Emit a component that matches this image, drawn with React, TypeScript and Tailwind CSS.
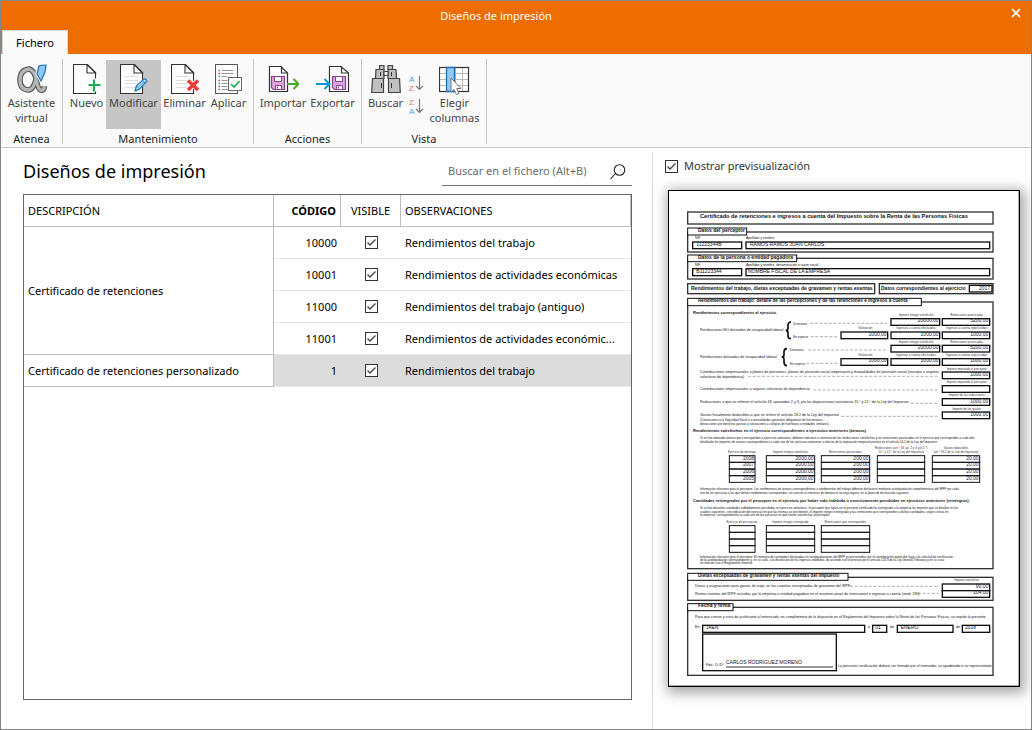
import type { ReactNode } from 'react'
import { X } from 'lucide-react'

const ROWS = [
  { code: '10000', notes: 'Rendimientos del trabajo' },
  { code: '10001', notes: 'Rendimientos de actividades económicas' },
  { code: '11000', notes: 'Rendimientos del trabajo (antiguo)' },
  { code: '11001', notes: 'Rendimientos de actividades económic...' },
]

/* ---------- ribbon icons ---------- */

function Sheet({ lines = false }: { lines?: boolean }) {
  return (
    <>
      <path d="M1 1H15L23 9V30H1Z" fill="#fff" stroke="#333" strokeWidth="1.1" />
      <path d="M14.5 1V9.500H23Z" fill="#fff" stroke="#333" strokeWidth="1.1" />
      {lines && <path d="M5 13H19M5 17H19M5 20H19M5 24H16" stroke="#ddd" fill="none" />}
    </>
  )
}

function NewIcon() {
  return (
    <svg width="28" height="31" viewBox="0.5 0.5 28 31">
      <Sheet />
      <path d="M22 15V28M15 22H28" stroke="#fafafa" strokeWidth="5" />
      <path d="M21.500 16V28M16 21.500H28" stroke="#1fad54" strokeWidth="2" />
    </svg>
  )
}

function EditIcon() {
  return (
    <svg width="28" height="31" viewBox="0.5 0.5 28 31">
      <Sheet lines />
      <path d="M15.500 27.500L17 22.500L24.500 15.500Q26.500 15 27.300 17.500L20 25.500Z" fill="#e9f5fd" stroke="#2a82c4" strokeWidth="1.500" strokeLinejoin="round" />
      <path d="M17 22.500L20 25.500M23 17L26 20M19 23.500L24.500 18" stroke="#2a82c4" fill="none" />
    </svg>
  )
}

function DeleteIcon() {
  return (
    <svg width="28" height="31" viewBox="0.5 0.5 28 31">
      <Sheet lines />
      <path d="M18 17L27 26M27 17L18 26" stroke="#fafafa" strokeWidth="5" />
      <path d="M17.500 17L27.500 26.500M27.500 17L17.500 26.500" stroke="#ee3b36" strokeWidth="3.500" />
    </svg>
  )
}

function ApplyIcon() {
  return (
    <svg width="28" height="31" viewBox="0.5 0.5 28 31">
      <rect x="1" y="1" width="22" height="29" fill="#fff" stroke="#555" />
      <path d="M7 7H19M7 10H19M7 13H13M7 17H13M7 20H13M7 23H13M7 26H19" stroke="#999" />
      <path d="M4 7H5.500M4 13H5.500M4 20H5.500M4 26H5.500" stroke="#1fad54" strokeWidth="1.300" />
      <path d="M4 10H5.500M4 17H5.500M4 23H5.500" stroke="#e0304e" strokeWidth="1.300" />
      <rect x="14" y="14" width="13" height="13" fill="#fff" stroke="#666" />
      <path d="M16.500 20.500L19.500 23.500L25 17.500" fill="none" stroke="#1fad54" strokeWidth="1.700" />
    </svg>
  )
}

function AssistantIcon() {
  const bowl = 'M20 6Q19 24 12 26Q3 26 3 16Q3 6 12 5Q17 6 19.500 16Q21 26 24.500 26.500Q27 26 27.500 22'
  return (
    <svg width="30" height="31" viewBox="0 0 30 31" fill="none">
      <path d={bowl} stroke="#555" strokeWidth="5.500" />
      <path d={bowl} stroke="#b5b5b5" strokeWidth="3.300" />
      <path d="M22 2Q24 1 29 1L28 8L24 17L20 10Z" fill="#90caf3" stroke="#fafafa" strokeWidth="3" />
      <path d="M22 2Q24 1 29 1L28 8L24 17L20 10Z" fill="#90caf3" stroke="#1c70b5" strokeWidth="1.200" />
    </svg>
  )
}

function Floppy() {
  return (
    <>
      <path d="M0 0H13V13H2L0 11Z" fill="#dca6dc" stroke="#8b3f8f" strokeWidth="1.200" />
      <path d="M3 0H10V5H3Z" fill="#fff" stroke="#8b3f8f" />
      <path d="M4 9H10V13H4Z" fill="#fff" stroke="#8b3f8f" />
      <path d="M6 10V12" stroke="#8b3f8f" strokeWidth="1.300" />
    </>
  )
}

function ImportIcon() {
  return (
    <svg width="32" height="31" viewBox="0 0 32 31">
      <path d="M2.500 2.500H14L20.500 9V27.500H2.500Z" fill="#fff" stroke="#333" strokeWidth="1.200" />
      <path d="M14.500 2.500V9H20.500" fill="none" stroke="#333" strokeWidth="1.200" />
      <g transform="translate(4.500 12.500)"><Floppy /></g>
      <path d="M20 20H31M26.500 15L31.500 20L26.500 25" fill="none" stroke="#47a828" strokeWidth="2" />
    </svg>
  )
}

function ExportIcon() {
  return (
    <svg width="34" height="31" viewBox="0 0 34 31">
      <path d="M13.500 2.500H25L32.500 9V27.500H13.500Z" fill="#fff" stroke="#333" strokeWidth="1.200" />
      <path d="M25.500 2.500V9H32.500" fill="none" stroke="#333" strokeWidth="1.200" />
      <g transform="translate(16.500 12.500)"><Floppy /></g>
      <path d="M0 20H13M8.500 15L13.500 20L8.500 25" fill="none" stroke="#0a96dc" strokeWidth="2" />
    </svg>
  )
}

function BinocularsIcon() {
  return (
    <svg width="30" height="31" viewBox="0 0 30 31">
      <g fill="#c0c0c0" stroke="#444" strokeWidth="1.200">
        <path d="M8.500 1.500H13V5.500H8.500ZM17 1.500H21.500V5.500H17Z" />
        <path d="M5 5.500H13V14.500H4.500ZM17 5.500H25L25.500 14.500H17Z" />
        <path d="M13 7.500H17V11.500H13Z" fill="#fff" />
        <path d="M1.500 14.500H12.500V28.500H0.700ZM17.500 14.500H28.500L29.300 28.500H17.500Z" />
      </g>
      <path d="M9.500 8V12M20.500 8V12M10.500 19V24M20.500 19V24" stroke="#333" />
    </svg>
  )
}

function SortIcon({ top, bottom }: { top: string; bottom: string }) {
  const tone = (c: string) => (c === 'A' ? '#4aa3dd' : '#ee6b68')
  return (
    <svg width="16" height="19" viewBox="0 0 16 19" fontFamily="Liberation Sans, sans-serif" fontSize="8">
      <text x="1" y="8" fill={tone(top)}>{top}</text>
      <text x="1" y="17" fill={tone(bottom)}>{bottom}</text>
      <path d="M11.500 2V15.500M8 12L11.500 15.500L15 12" fill="none" stroke="#777" strokeWidth="1.200" />
    </svg>
  )
}

function ColumnsIcon() {
  return (
    <svg width="31" height="31" viewBox="0 0 31 31">
      <rect x="0.500" y="3.500" width="29" height="24" fill="#fff" />
      <path d="M0.500 9.500H29.500M0.500 15.500H29.500M0.500 21.500H29.500M16.500 3V27M23.500 3V27" stroke="#bbb" />
      <rect x="0.500" y="3.500" width="29" height="24" fill="none" stroke="#333" strokeWidth="1.200" />
      <path d="M7.500 3.500H15.500V27.500H7.500Z" fill="#90caf3" stroke="#1c70b5" strokeWidth="1.300" />
      <path d="M12 14V28L15 25.500L17.500 30.500L20 29.500L17.700 24.500H22Z" fill="#fff" stroke="#777" />
    </svg>
  )
}

function SearchIcon() {
  return (
    <svg width="16" height="16" viewBox="0 0 16 16" fill="none" stroke="#222" strokeWidth="1.100">
      <circle cx="9.500" cy="6" r="5.300" />
      <path d="M5.500 9.500L0.500 15" />
    </svg>
  )
}

/* ---------- ribbon ---------- */

function RibbonButton({ icon, label, active = false, width }: { icon: ReactNode; label: string; active?: boolean; width: string }) {
  return (
    <button className={`flex h-[69px] flex-col items-center pt-1 text-center leading-[15px] text-[#444] ${width} ${active ? 'bg-[#c6c6c6]' : ''}`}>
      <span className="h-[31px]">{icon}</span>
      {label}
    </button>
  )
}

function RibbonGroup({ label, children }: { label: string; children: ReactNode }) {
  return (
    <section aria-label={label} className="flex h-[85px] flex-col border-r border-[#c8c8c8] px-1">
      <div className="flex pt-px">{children}</div>
      <p className="text-center leading-5 text-[#222]">{label}</p>
    </section>
  )
}

function CheckBox({ id, label }: { id?: string; label?: string }) {
  return (
    <span className="grid place-items-center">
      <input id={id} type="checkbox" defaultChecked aria-label={label} className="peer size-[13px] appearance-none border border-[#333] bg-white [grid-area:1/1]" />
      <svg width="13" height="13" viewBox="0 0 13 13" className="pointer-events-none hidden [grid-area:1/1] peer-checked:block">
        <path d="M2.500 6.500L5 9L10.500 3.500" fill="none" stroke="#444" strokeWidth="1.300" />
      </svg>
    </span>
  )
}

/* ---------- certificate preview ---------- */

type Box = [x1: number, y1: number, x2: number, y2: number]
type Line = [x: number, y: number, size: number, text: string]

const FRAMES: Box[] = [
  [59, 66, 975, 102],
  [59, 126, 975, 186],
  [59, 205, 975, 267],
  [59, 281, 620, 311],
  [634, 281, 975, 311],
  [59, 336, 975, 1136],
  [59, 1162, 975, 1231],
  [59, 1252, 975, 1456],
]

const TABS: Box[] = [
  [59, 114, 236, 135],
  [59, 195, 386, 215],
  [59, 325, 760, 347],
  [59, 1150, 540, 1171],
  [59, 1241, 195, 1262],
]

const FIELDS: Box[] = [
  [74, 156, 221, 176],
  [234, 156, 965, 176],
  [74, 236, 221, 257],
  [234, 236, 965, 257],
  [904, 286, 972, 306],
  [669, 386, 815, 406],
  [823, 386, 965, 406],
  [519, 426, 659, 446],
  [669, 426, 815, 446],
  [823, 426, 965, 446],
  [669, 466, 815, 486],
  [823, 466, 965, 486],
  [519, 506, 659, 526],
  [669, 506, 815, 526],
  [823, 506, 965, 526],
  [823, 546, 965, 566],
  [823, 587, 965, 607],
  [823, 626, 965, 646],
  [823, 666, 965, 686],
  [823, 1182, 965, 1202],
  [823, 1202, 965, 1222],
  [104, 1306, 590, 1327],
  [614, 1306, 656, 1327],
  [688, 1306, 855, 1327],
  [883, 1306, 965, 1327],
  [104, 1332, 505, 1442],
]

// four-row tables: left edge, right edge and cell values
const ARREARS: { x1: number; x2: number; values: string[] }[] = [
  { x1: 184, x2: 261, values: ['2008', '2007', '2006', '2005'] },
  { x1: 295, x2: 440, values: ['2000,00', '2000,00', '2000,00', '2000,00'] },
  { x1: 460, x2: 605, values: ['200,00', '200,00', '200,00', '200,00'] },
  { x1: 628, x2: 770, values: [] },
  { x1: 793, x2: 935, values: ['20,00', '20,00', '20,00', '20,00'] },
]

const DASHES: [number, number, number][] = [
  [426, 657, 400],
  [428, 511, 440],
  [420, 657, 480],
  [415, 511, 520],
  [240, 814, 559],
  [436, 814, 600],
  [728, 814, 640],
  [520, 814, 679],
  [546, 814, 1189],
  [750, 814, 1210],
]

const HEADINGS: Line[] = [
  [96, 85, 17, 'Certificado de retenciones e ingresos a cuenta del Impuesto sobre la Renta de las Personas Físicas'],
  [90, 126, 15, 'Datos del perceptor'],
  [90, 207, 15, 'Datos de la persona o entidad pagadora'],
  [69, 299, 15, 'Rendimientos del trabajo, dietas exceptuadas de gravamen y rentas exentas'],
  [639, 299, 15, 'Datos correspondientes al ejercicio'],
  [90, 337, 14, 'Rendimientos del trabajo: detalle de las percepciones y de las retenciones e ingresos a cuenta'],
  [75, 372, 12, 'Rendimientos correspondientes al ejercicio.'],
  [75, 726, 12, 'Rendimientos satisfechos en el ejercicio correspondientes a ejercicios anteriores (atrasos)'],
  [75, 936, 12, 'Cantidades reintegradas por el perceptor en el ejercicio por haber sido indebida o excesivamente percibidas en ejercicios anteriores (reintegros).'],
  [90, 1162, 14, 'Dietas exceptuadas de gravamen y rentas exentas del Impuesto'],
  [90, 1252, 15, 'Fecha y firma'],
]

const LINES: Line[] = [
  [81, 148, 10, 'NIF'],
  [234, 148, 10, 'Apellidos y nombre'],
  [81, 228, 10, 'NIF'],
  [234, 228, 10, 'Apellidos y nombre, denominación o razón social'],
  [96, 422, 11, 'Retribuciones NO derivadas de incapacidad laboral'],
  [376, 404, 9, 'Dinerarias'],
  [376, 443, 9, 'En especie'],
  [96, 503, 11, 'Retribuciones derivadas de incapacidad laboral'],
  [366, 483, 9, 'Dinerarias'],
  [366, 524, 9, 'En especie'],
  [96, 548, 11, 'Contribuciones empresariales a planes de pensiones, planes de previsión social empresarial y mutualidades de previsión social (excepto a seguros'],
  [96, 563, 11, 'colectivos de dependencia)'],
  [96, 599, 11, 'Contribuciones empresariales a seguros colectivos de dependencia'],
  [96, 638, 11, 'Reducciones a que se refieren el artículo 18, apartados 2 y 3, y/o las disposiciones transitorias 11.ª y 12.ª de la Ley del Impuesto'],
  [96, 677, 11, 'Gastos fiscalmente deducibles a que se refiere el artículo 19.2 de la Ley del Impuesto'],
  [96, 692, 9, '(Cotizaciones a la Seguridad Social o a mutualidades generales obligatorias de funcionarios,'],
  [96, 704, 9, 'detracciones por derechos pasivos y cotizaciones a colegios de huérfanos o entidades similares)'],
  [96, 748, 9, 'Si se han abonado atrasos que correspondan a ejercicios anteriores, deberán indicarse a continuación las retribuciones satisfechas y las retenciones practicadas en el ejercicio que corresponden a cada año'],
  [96, 758, 9, 'detallando los importes de atrasos correspondientes a cada uno de los ejercicios anteriores a efectos de la imputación temporal prevista en el artículo 14.2 de la Ley del Impuesto'],
  [96, 901, 9, 'Información relevante para el perceptor: Los rendimientos de atrasos correspondientes a rendimientos del trabajo deberán declararse mediante autoliquidación complementaria del IRPF por cada'],
  [96, 911, 9, 'uno de los ejercicios a los que dichos rendimientos correspondan, sin sanción ni intereses de demora ni recargo alguno, en el plazo de declaración siguiente.'],
  [96, 958, 9, 'Si se han devuelto cantidades indebidamente percibidas en ejercicios anteriores, el perceptor que figura en el presente certificado ha reintegrado a la empresa los importes que se detallan en los'],
  [96, 968, 9, 'cuadros siguientes, con indicación del ejercicio en que las mismas se percibieron, el importe íntegro reintegrado y las retenciones que corresponden a dichas cantidades, según consta en'],
  [96, 977, 9, 'la empresa, correspondientes a cada uno de los ejercicios en que fueron satisfechas al perceptor.'],
  [96, 1103, 9, 'Información relevante para el perceptor: El reintegro de cantidades declaradas en autoliquidaciones del IRPF ya presentadas por el contribuyente podrá dar lugar a la solicitud de rectificación'],
  [96, 1112, 9, 'de la autoliquidación correspondiente y, en su caso, a la devolución de los ingresos indebidos, de acuerdo con lo previsto por el artículo 120.3 de la Ley General Tributaria y en su caso'],
  [96, 1123, 9, 'en relación con el Reglamento General.'],
  [81, 1192, 11, 'Dietas y asignaciones para gastos de viaje, en las cuantías exceptuadas de gravamen del IRPF'],
  [81, 1214, 11, 'Rentas exentas del IRPF incluidas por la empresa o entidad pagadora en el resumen anual de retenciones e ingresos a cuenta (mod. 190)'],
  [81, 1283, 11, 'Para que conste y sirva de justificante al interesado, en cumplimiento de lo dispuesto en el Reglamento del Impuesto sobre la Renta de las Personas Físicas, se expide la presente'],
  [81, 1313, 11, 'En'],
  [600, 1313, 11, 'a'],
  [666, 1313, 11, 'de'],
  [864, 1313, 11, 'de'],
  [114, 1427, 11, 'Fdo.: D./Dª'],
  [510, 1432, 11, 'La presente certificación deberá ser firmada por el retenedor, su apoderado o su representante'],
]

const ENTRIES: Line[] = [
  [85, 169, 15, '11223344B'],
  [246, 169, 15, 'RAMOS RAMOS JUAN CARLOS'],
  [85, 248, 15, 'B11223344'],
  [240, 248, 15, 'NOMBRE FISCAL DE LA EMPRESA'],
  [113, 1317, 15, 'JAEN'],
  [622, 1317, 15, '01'],
  [698, 1317, 15, 'ENERO'],
  [891, 1317, 15, '2018'],
  [174, 1422, 15, 'CARLOS RODRIGUEZ MORENO'],
]

// right-aligned figures
const AMOUNTS: [number, number, string][] = [
  [966, 300, '2017'],
  [812, 397, '20000,00'],
  [961, 397, '5200,00'],
  [656, 437, '1000,00'],
  [812, 437, '1000,00'],
  [961, 437, '1000,00'],
  [812, 477, '20000,00'],
  [961, 477, '5200,00'],
  [656, 517, '1000,00'],
  [812, 517, '1000,00'],
  [961, 517, '1000,00'],
  [961, 558, '1000,00'],
  [961, 638, '1000,00'],
  [961, 677, '1000,00'],
  [961, 1193, '90,00'],
  [961, 1213, '104,00'],
]

// captions centred over the fields
const CAPTIONS: [number, number, string][] = [
  [744, 378, 'Importe íntegro satisfecho'],
  [896, 378, 'Retenciones practicadas'],
  [592, 418, 'Valoración'],
  [744, 418, 'Ingresos a cuenta efectuados'],
  [896, 418, 'Ingresos a cuenta repercutidos'],
  [744, 458, 'Importe íntegro satisfecho'],
  [896, 458, 'Retenciones practicadas'],
  [592, 498, 'Valoración'],
  [744, 498, 'Ingresos a cuenta efectuados'],
  [896, 498, 'Ingresos a cuenta repercutidos'],
  [896, 539, 'Importe imputado al perceptor'],
  [896, 579, 'Importe imputado al perceptor'],
  [896, 618, 'Importe de las reducciones'],
  [896, 659, 'Importe de los gastos'],
  [222, 788, 'Ejercicio de devengo'],
  [367, 788, 'Importe íntegro satisfecho'],
  [532, 788, 'Retenciones practicadas'],
  [700, 778, 'Reducciones (art.º 18, ap. 2 y 3 y/o D.T.'],
  [700, 788, '11.ª y 12.ª de la Ley del Impuesto)'],
  [864, 778, 'Gastos deducibles'],
  [864, 788, '(art.º 19.2 de la Ley del Impuesto)'],
  [222, 998, 'Ejercicio de percepción'],
  [367, 998, 'Importe íntegro reintegrado'],
  [532, 998, 'Retenciones que corresponden'],
  [896, 1173, 'Importe satisfecho'],
]

function Rects({ boxes, stroke, width }: { boxes: Box[]; stroke: string; width: number }) {
  return (
    <g fill="#fff" stroke={stroke} strokeWidth={width}>
      {boxes.map(([x1, y1, x2, y2]) => (
        <rect key={`${x1}-${y1}`} x={x1} y={y1} width={x2 - x1} height={y2 - y1} />
      ))}
    </g>
  )
}

function Grid({ top, columns }: { top: number; columns: typeof ARREARS }) {
  return (
    <>
      {columns.map(({ x1, x2, values }) => (
        <g key={x1}>
          {[0, 1, 2, 3].map((i) => (
            <rect key={i} x={x1} y={top + i * 20} width={x2 - x1} height="20" fill="none" stroke="#111" strokeWidth="3" />
          ))}
          {values.map((value, i) => (
            <text key={i} x={x2 - 3} y={top + 12 + i * 20} fontSize="15" textAnchor="end" fill="#223">{value}</text>
          ))}
        </g>
      ))}
    </>
  )
}

function Certificate() {
  return (
    <svg viewBox="0 0 1056 1491" className="block w-full bg-white shadow-[2px_3px_12px_3px_rgba(0,0,0,0.35)]" fontFamily="Liberation Sans, Arial, sans-serif" role="img" aria-label="Certificado de retenciones">
      <rect x="1" y="1" width="1053" height="1488" fill="#fff" stroke="#000" strokeWidth="4" />
      <Rects boxes={FRAMES} stroke="#333" width={4} />
      <Rects boxes={TABS} stroke="#111" width={3} />
      <Rects boxes={FIELDS} stroke="#111" width={4} />
      <g stroke="#888" strokeWidth="2" strokeDasharray="9 5">
        {DASHES.map(([x1, x2, y]) => (
          <path key={y} d={`M${x1} ${y}H${x2}`} />
        ))}
      </g>
      <g fill="none" stroke="#111" strokeWidth="5">
        <path d="M369 396Q360 396 360 406V414Q360 421 353 421Q360 421 360 428V437Q360 446 369 446" />
        <path d="M357 476Q348 476 348 486V494Q348 501 341 501Q348 501 348 508V517Q348 527 357 527" />
      </g>
      <path d="M174 1431H495" stroke="#333" strokeWidth="3" />
      <Grid top={797} columns={ARREARS} />
      <Grid top={1007} columns={ARREARS.slice(0, 3).map((c) => ({ ...c, values: [] }))} />
      <g fontWeight="700" fill="#111">
        {HEADINGS.map(([x, y, size, text]) => (
          <text key={y + x} x={x} y={y} fontSize={size}>{text}</text>
        ))}
      </g>
      <g fill="#111">
        {LINES.map(([x, y, size, text]) => (
          <text key={`${x}-${y}`} x={x} y={y} fontSize={size}>{text}</text>
        ))}
        {ENTRIES.map(([x, y, size, text]) => (
          <text key={`${x}-${y}`} x={x} y={y} fontSize={size}>{text}</text>
        ))}
      </g>
      <g textAnchor="end" fontSize="15" fill="#223">
        {AMOUNTS.map(([x, y, text]) => (
          <text key={`${x}-${y}`} x={x} y={y}>{text}</text>
        ))}
      </g>
      <g textAnchor="middle" fontSize="9" fill="#334">
        {CAPTIONS.map(([x, y, text]) => (
          <text key={`${x}-${y}`} x={x} y={y}>{text}</text>
        ))}
      </g>
    </svg>
  )
}

/* ---------- page ---------- */

export default function App() {
  return (
    <div className="flex min-h-screen flex-col border border-[#858585] bg-white font-['Noto_Sans',sans-serif] text-[11px] text-black">
      <header className="bg-[#ed6d00]">
        <div className="flex h-[29px] items-center text-white">
          <h1 className="flex-1 pt-0.5 text-center">Diseños de impresión</h1>
          <button aria-label="Cerrar" className="mb-1.5 flex w-10 justify-center pl-2.5">
            <X size={14} strokeWidth={3} />
          </button>
        </div>
        <nav className="flex px-px">
          <button className="-mb-px h-[25px] w-[66px] border-x border-t border-[#d8d8d8] bg-[#fafafa]">Fichero</button>
        </nav>
      </header>

      <div className="flex border-b border-[#c8c8c8] bg-[#fafafa] pt-[5px] pb-[3px]">
        <RibbonGroup label="Atenea">
          <RibbonButton icon={<AssistantIcon />} label="Asistente virtual" width="w-[53px]" />
        </RibbonGroup>
        <RibbonGroup label="Mantenimiento">
          <RibbonButton icon={<NewIcon />} label="Nuevo" width="w-[39px]" />
          <RibbonButton icon={<EditIcon />} label="Modificar" width="w-[55px]" active />
          <RibbonButton icon={<DeleteIcon />} label="Eliminar" width="w-[47px]" />
          <RibbonButton icon={<ApplyIcon />} label="Aplicar" width="w-[41px]" />
        </RibbonGroup>
        <RibbonGroup label="Acciones">
          <RibbonButton icon={<ImportIcon />} label="Importar" width="w-[50px]" />
          <RibbonButton icon={<ExportIcon />} label="Exportar" width="w-[49px]" />
        </RibbonGroup>
        <RibbonGroup label="Vista">
          <RibbonButton icon={<BinocularsIcon />} label="Buscar" width="w-[39px]" />
          <div className="flex w-[22px] flex-col items-center gap-1 pt-3.5">
            <button aria-label="Orden ascendente"><SortIcon top="A" bottom="Z" /></button>
            <button aria-label="Orden descendente"><SortIcon top="Z" bottom="A" /></button>
          </div>
          <RibbonButton icon={<ColumnsIcon />} label="Elegir columnas" width="w-[55px]" />
        </RibbonGroup>
      </div>

      <div className="flex flex-1 pt-1">
        <main className="flex min-w-0 flex-1 flex-col pr-5 pb-[29px] pl-[22px]">
          <div className="flex items-end justify-between pb-2">
            <h2 className="pb-px text-[18px] leading-7">Diseños de impresión</h2>
            <div className="flex h-[34px] w-[190px] items-center border-b border-[#777] pt-1.5 pr-1.5 pl-1.5">
              <input type="search" aria-label="Buscar en el fichero" placeholder="Buscar en el fichero (Alt+B)" className="min-w-0 flex-1 outline-none placeholder:text-[#6b6b6b]" />
              <SearchIcon />
            </div>
          </div>

          <div className="flex-1 border border-[#666]">
            <table className="w-full table-fixed border-separate border-spacing-0 text-left">
              <colgroup>
                <col className="w-[250px]" />
                <col className="w-[67px]" />
                <col className="w-[60px]" />
                <col />
              </colgroup>
              <thead>
                <tr className="h-8 *:border-r *:border-b *:border-[#bdbdbd] *:pt-0.5">
                  <th className="pl-1 font-normal">DESCRIPCIÓN</th>
                  <th className="pr-1 text-right font-bold">CÓDIGO</th>
                  <th className="text-center font-normal">VISIBLE</th>
                  <th className="pl-1 font-normal">OBSERVACIONES</th>
                </tr>
              </thead>
              <tbody>
                {ROWS.map((row, i) => (
                  <tr key={row.code} className="h-8">
                    {i === 0 && (
                      <td rowSpan={ROWS.length} className="border-r border-b border-[#bdbdbd] pt-0.5 pl-1">Certificado de retenciones</td>
                    )}
                    <td className="border-b border-[#e8e8e8] pt-0.5 pr-1 text-right">{row.code}</td>
                    <td className="border-b border-[#e8e8e8]"><CheckBox label={`Visible ${row.code}`} /></td>
                    <td className="truncate border-b border-[#e8e8e8] pt-0.5 pl-1">{row.notes}</td>
                  </tr>
                ))}
                <tr className="h-8 bg-[#dcdcdc]">
                  <td className="border-r border-b border-[#bdbdbd] bg-white pt-0.5 pl-1">Certificado de retenciones personalizado</td>
                  <td className="border-b border-[#e8e8e8] pt-0.5 pr-1 text-right">1</td>
                  <td className="border-b border-[#e8e8e8]"><CheckBox label="Visible 1" /></td>
                  <td className="truncate border-b border-[#e8e8e8] pt-0.5 pl-1">Rendimientos del trabajo</td>
                </tr>
              </tbody>
            </table>
          </div>
        </main>

        <aside className="w-[379px] border-l border-[#d8d8d8] pr-[11px] pl-[15px]">
          <div className="-ml-[3px] flex h-7 items-center gap-1.5 text-[#333]">
            <CheckBox id="preview" />
            <label htmlFor="preview">Mostrar previsualización</label>
          </div>
          <div className="pt-2.5">
            <Certificate />
          </div>
        </aside>
      </div>
    </div>
  )
}
